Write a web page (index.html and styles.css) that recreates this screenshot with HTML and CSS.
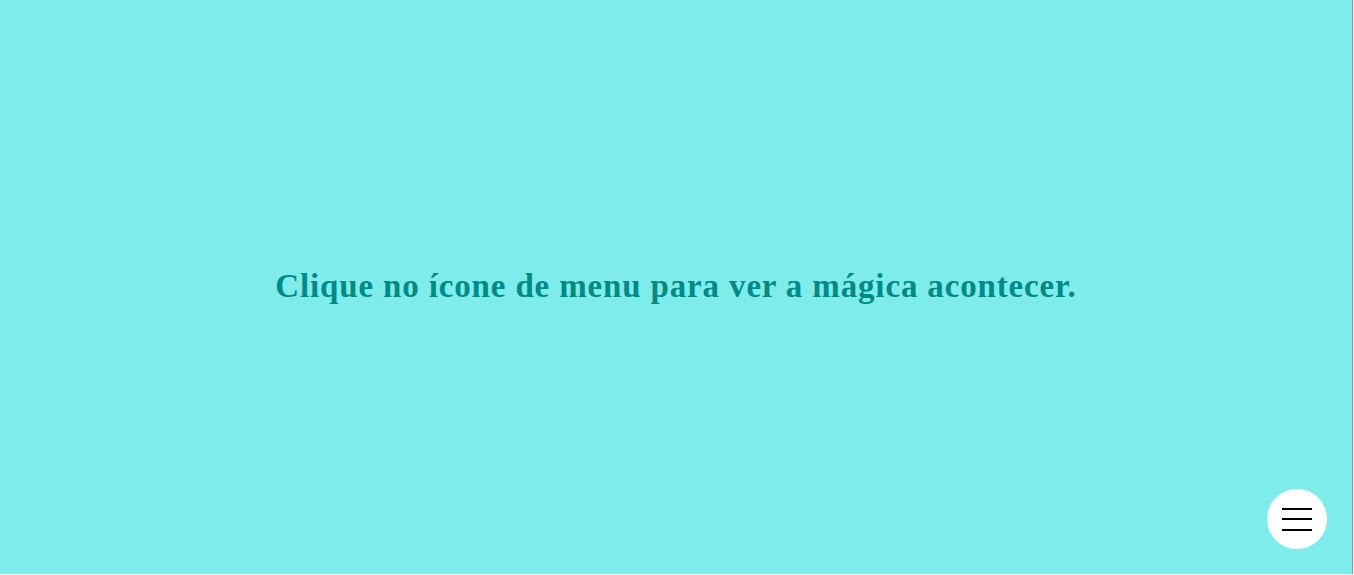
FILE: index.html
```html
<!DOCTYPE html>
<html lang="pt">
<head>
<meta charset="utf-8">
<title>Menu</title>
<link rel="stylesheet" href="styles.css">
</head>
<body>
<main class="stage">
  <p class="message">Clique no ícone de menu para ver a mágica acontecer.</p>
  <button class="menu-btn" aria-label="Menu">
    <span class="bar"></span>
    <span class="bar"></span>
    <span class="bar"></span>
  </button>
</main>
</body>
</html>
```
FILE: styles.css
```css
html, body {
  margin: 0;
  padding: 0;
  height: 100%;
  background: #e8f8f8;
  overflow: hidden;
}
.stage {
  position: relative;
  width: 1352px;
  height: 574px;
  background: #7fecec;
  border-right: 1px solid #8a9a9a;
  display: flex;
  align-items: center;
  justify-content: center;
}
.message {
  margin: 0;
  font-family: "Liberation Serif", "DejaVu Serif", serif;
  font-weight: bold;
  font-size: 33px;
  color: #028a85;
  letter-spacing: 0.85px;
  transform: translateY(-1px);
}
.menu-btn {
  position: absolute;
  right: 25px;
  bottom: 25px;
  width: 60px;
  height: 60px;
  border-radius: 50%;
  background: #fff;
  border: 0;
  padding: 0;
  display: flex;
  flex-direction: column;
  align-items: center;
  justify-content: center;
  gap: 8.5px;
}
.bar {
  display: block;
  width: 30px;
  height: 2px;
  background: #000;
}
```
